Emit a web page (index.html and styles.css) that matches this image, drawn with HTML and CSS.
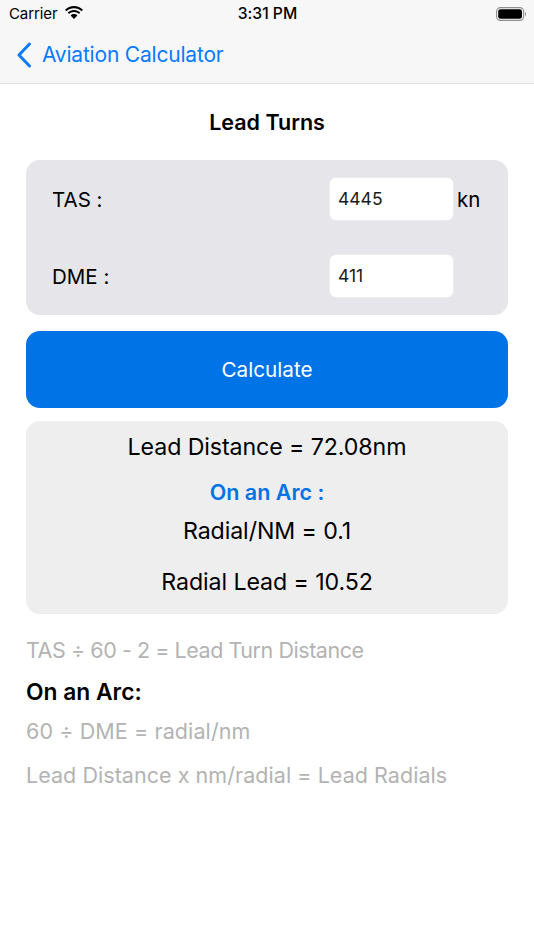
FILE: index.html
```html
<!DOCTYPE html>
<html lang="en">
<head>
<meta charset="utf-8">
<title>Lead Turns</title>
<link rel="stylesheet" href="styles.css">
</head>
<body>
<header class="top">
  <div class="status">
    <div class="status-left">
      <span class="carrier">Carrier</span>
      <svg class="wifi" width="20" height="14" viewBox="0 0 20 14"><path d="M10 2.200c3 0 5.600 1.100 7.600 3l1.400-1.500C16.600 1.400 13.500 0 10 0S3.400 1.400 1 3.700l1.400 1.500c2-1.900 4.600-3 7.600-3z"/><path d="M10 6.100c1.900 0 3.600.7 4.900 1.900l1.400-1.500C14.600 4.900 12.400 4 10 4s-4.600.9-6.300 2.500L5.100 8c1.300-1.200 3-1.900 4.900-1.900z"/><path d="M10 8c-1.300 0-2.500.5-3.400 1.400L10 13l3.400-3.600C12.500 8.500 11.300 8 10 8z"/></svg>
    </div>
    <span class="time">3:31 PM</span>
    <div class="status-right">
      <svg width="30" height="14" viewBox="0 0 30 14"><rect x=".6" y=".6" width="27" height="12.800" rx="3.800" fill="none" stroke="#8e8e8e" stroke-width="1.100"/><rect x="2.200" y="2.200" width="23.800" height="9.600" rx="2.400" fill="#000"/><path d="M29 5v4c.7-.3 1-1.100 1-2s-.3-1.700-1-2z" fill="#8e8e8e"/></svg>
    </div>
  </div>
  <nav class="nav">
    <svg class="chevron" width="16" height="26" viewBox="0 0 16 26"><path d="M13.500 2 3 13l10.500 11" fill="none" stroke="#0a7aff" stroke-width="3" stroke-linecap="round" stroke-linejoin="round"/></svg>
    <span class="nav-label">Aviation Calculator</span>
  </nav>
</header>
<main class="content">
  <h1 class="title">Lead Turns</h1>
  <section class="card inputs">
    <div class="row row-tas">
      <span class="label">TAS :</span>
      <span class="field">4445</span>
      <span class="unit">kn</span>
    </div>
    <div class="row row-dme">
      <span class="label">DME :</span>
      <span class="field">411</span>
      <span class="unit"></span>
    </div>
  </section>
  <button class="calc" type="button">Calculate</button>
  <section class="card results">
    <p class="res res-lead">Lead Distance = 72.08nm</p>
    <p class="res-head">On an Arc :</p>
    <p class="res res-radial">Radial/NM = 0.1</p>
    <p class="res res-radlead">Radial Lead = 10.52</p>
  </section>
  <section class="notes">
    <p class="note note-1">TAS ÷ 60 - 2 = Lead Turn Distance</p>
    <p class="note-head">On an Arc:</p>
    <p class="note note-2">60 ÷ DME = radial/nm</p>
    <p class="note note-3">Lead Distance x nm/radial = Lead Radials</p>
  </section>
</main>
</body>
</html>
```
FILE: styles.css
```css
* { box-sizing: border-box; }
html, body { margin: 0; padding: 0; }
body {
  width: 534px;
  height: 950px;
  background: #fff;
  color: #000;
  font-family: Inter, "Liberation Sans", sans-serif;
  font-feature-settings: "calt" 0;
  overflow: hidden;
}
p, h1 { margin: 0; }
.top {
  height: 84px;
  background: #f7f7f7;
  border-bottom: 1px solid #dedede;
}
.status {
  height: 27px;
  display: grid;
  grid-template-columns: 1fr auto 1fr;
  align-items: center;
  padding: 0 8px 0 9px;
}
.status-left { display: flex; align-items: center; gap: 7px; }
.carrier { font-size: 15px; letter-spacing: -0.1px; }
.wifi { margin-bottom: 2px; }
.time { font-size: 15.700px; font-weight: 500; }
.status-right { display: flex; justify-content: flex-end; }
.nav {
  height: 56px;
  display: flex;
  align-items: center;
  padding: 0 0 1px 16px;
  gap: 10px;
}
.nav-label { color: #0a7aff; font-size: 21px; letter-spacing: -0.2px; }
.content { padding: 0 26px; }
.title {
  font-size: 21.500px;
  font-weight: 600;
  text-align: center;
  line-height: 24px;
  padding-top: 26px;
  height: 76px;
}
.card { border-radius: 14px; }
.inputs {
  height: 155px;
  background: #e5e5ea;
  padding: 17px 0 0 26px;
}
.row {
  display: grid;
  grid-template-columns: 277px 125px auto;
  align-items: center;
  height: 44px;
  font-size: 20.500px;
}
.row-dme { margin-top: 33px; }
.field {
  height: 44px;
  background: #fff;
  border: 1px solid #ececef;
  border-radius: 7px;
  padding-left: 8px;
  line-height: 42px;
  font-size: 17.500px;
  color: #1a1a1a;
}
.unit { padding-left: 3px; }
.calc {
  display: block;
  width: 100%;
  height: 77px;
  margin-top: 16px;
  border: 0;
  border-radius: 14px;
  background: #0073e6;
  color: #fff;
  font-family: inherit;
  font-feature-settings: inherit;
  font-size: 20.700px;
}
.results {
  height: 193px;
  margin-top: 13px;
  background: #eeeeef;
  text-align: center;
  padding-top: 12px;
}
.res { font-size: 23.200px; line-height: 28px; letter-spacing: -0.1px; }
.res-head { color: #0073e6; font-size: 21.500px; font-weight: 600; line-height: 24px; margin-top: 19px; }
.res-radial { margin-top: 13px; }
.res-radlead { margin-top: 23px; }
.notes { padding-top: 22px; }
.note { color: #b3b3b3; font-size: 21.500px; line-height: 28px; }
.note-1 { letter-spacing: -0.45px; }
.note-head { font-size: 22.800px; font-weight: 600; line-height: 26px; margin-top: 15px; }
.note-2 { margin-top: 12px; letter-spacing: 0.1px; }
.note-3 { margin-top: 16px; letter-spacing: 0.05px; }
```
